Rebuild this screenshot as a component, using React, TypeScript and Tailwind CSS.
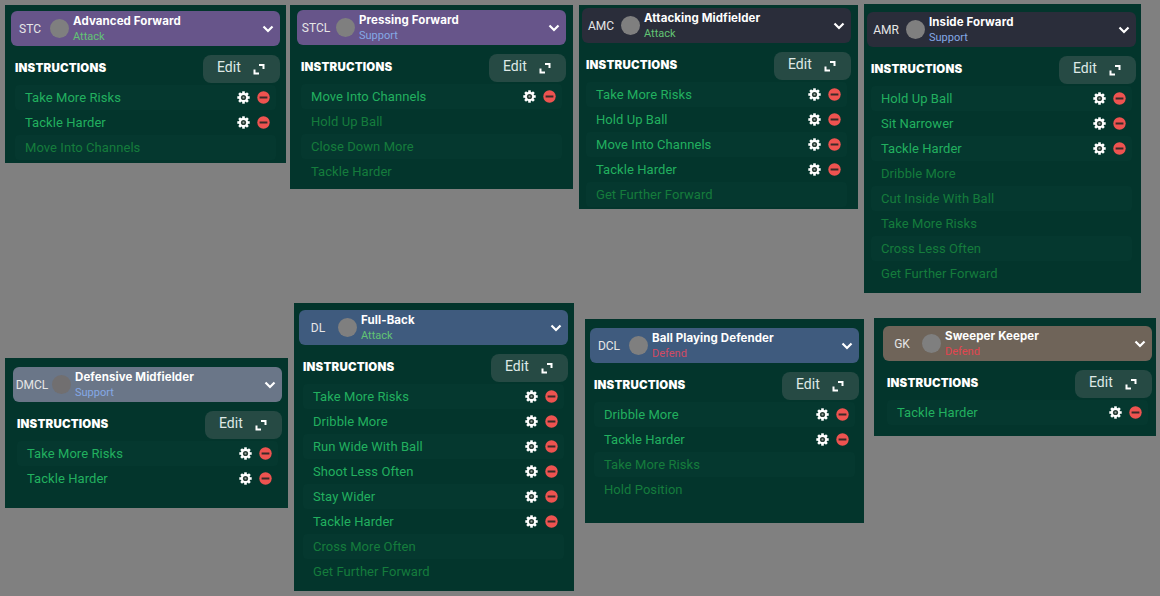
type Panel = {
  pos: string;
  code: string;
  name: string;
  duty: string;
  head: string;
  dutyColor: string;
  avatar: string;
  active: string[];
  inactive: string[];
};

const panels: Panel[] = [
  { pos: "left-[5px] top-[5px] w-[281px] h-[158px] pl-[6px] pt-[6px]", code: "STC", name: "Advanced Forward", duty: "Attack", head: "bg-[#67558a]", dutyColor: "text-[#62c474]", avatar: "bg-[#7f7f7f]", active: ["Take More Risks", "Tackle Harder"], inactive: ["Move Into Channels"] },
  { pos: "left-[290px] top-[5px] w-[283px] h-[184px] pl-[7px] pt-[5px]", code: "STCL", name: "Pressing Forward", duty: "Support", head: "bg-[#67558a]", dutyColor: "text-[#85a9e6]", avatar: "bg-[#7f7f7f]", active: ["Move Into Channels"], inactive: ["Hold Up Ball", "Close Down More", "Tackle Harder"] },
  { pos: "left-[579px] top-[5px] w-[279px] h-[204px] pl-[3px] pt-[3px]", code: "AMC", name: "Attacking Midfielder", duty: "Attack", head: "bg-[#2a2d3a]", dutyColor: "text-[#62c474]", avatar: "bg-[#7f7f7f]", active: ["Take More Risks", "Hold Up Ball", "Move Into Channels", "Tackle Harder"], inactive: ["Get Further Forward"] },
  { pos: "left-[864px] top-[4px] w-[277px] h-[289px] pl-[3px] pt-[8px]", code: "AMR", name: "Inside Forward", duty: "Support", head: "bg-[#2a2d3a]", dutyColor: "text-[#85a9e6]", avatar: "bg-[#7f7f7f]", active: ["Hold Up Ball", "Sit Narrower", "Tackle Harder"], inactive: ["Dribble More", "Cut Inside With Ball", "Take More Risks", "Cross Less Often", "Get Further Forward"] },
  { pos: "left-[5px] top-[358px] w-[283px] h-[150px] pl-[8px] pt-[9px]", code: "DMCL", name: "Defensive Midfielder", duty: "Support", head: "bg-[#6a7688]", dutyColor: "text-[#85a9e6]", avatar: "bg-[#716f70]", active: ["Take More Risks", "Tackle Harder"], inactive: [] },
  { pos: "left-[294px] top-[303px] w-[280px] h-[288px] pl-[5px] pt-[7px]", code: "DL", name: "Full-Back", duty: "Attack", head: "bg-[#3f5b7e]", dutyColor: "text-[#62c474]", avatar: "bg-[#7f7f7f]", active: ["Take More Risks", "Dribble More", "Run Wide With Ball", "Shoot Less Often", "Stay Wider", "Tackle Harder"], inactive: ["Cross More Often", "Get Further Forward"] },
  { pos: "left-[585px] top-[319px] w-[279px] h-[204px] pl-[5px] pt-[9px]", code: "DCL", name: "Ball Playing Defender", duty: "Defend", head: "bg-[#3f5b7e]", dutyColor: "text-[#d24a63]", avatar: "bg-[#7f7f7f]", active: ["Dribble More", "Tackle Harder"], inactive: ["Take More Risks", "Hold Position"] },
  { pos: "left-[874px] top-[318px] w-[282px] h-[118px] pl-[9px] pt-[8px]", code: "GK", name: "Sweeper Keeper", duty: "Defend", head: "bg-[#6f6459]", dutyColor: "text-[#e2454f]", avatar: "bg-[#7f7f7f]", active: ["Tackle Harder"], inactive: [] },
];

function ExpandIcon() {
  return (
    <svg width="12" height="12" viewBox="0 0 12 12" fill="none" stroke="white" strokeWidth="2">
      <path d="M6 2H10.5V6" />
      <path d="M1.5 6.5V10.5H6" />
    </svg>
  );
}

const teeth = [0, 45, 90, 135, 180, 225, 270, 315];

function GearIcon() {
  return (
    <svg width="13" height="13" viewBox="0 0 13 13">
      {teeth.map((deg) => (
        <rect key={deg} x="5.2" y="0.3" width="2.6" height="3" fill="white" transform={`rotate(${deg} 6.5 6.5)`} />
      ))}
      <circle cx="6.5" cy="6.5" r="4.7" fill="white" />
      <circle cx="6.5" cy="6.5" r="2.6" fill="#2c3f38" />
      <circle cx="6.5" cy="6.5" r="1" fill="#9aa5a0" />
    </svg>
  );
}

function RemoveIcon() {
  return (
    <svg width="13" height="13" viewBox="0 0 13 13">
      <circle cx="6.5" cy="6.5" r="6.2" fill="#ee5350" />
      <rect x="2.6" y="5.5" width="7.8" height="2" fill="#3a2a28" />
    </svg>
  );
}

function Row({ label, on, shaded }: { label: string; on: boolean; shaded: boolean }) {
  return (
    <div className={`flex h-[25px] items-center justify-between rounded-[4px] pl-[10px] pr-[6px] ${shaded ? "bg-[#05382f]" : ""}`}>
      <span className={`text-[13px] tracking-[0.06px] ${on ? "text-[#22b05f]" : "text-[#157c3c]"}`}>{label}</span>
      {on && (
        <span className="flex items-center gap-[7px]">
          <GearIcon />
          <RemoveIcon />
        </span>
      )}
    </div>
  );
}

function Card({ p }: { p: Panel }) {
  const rows = [...p.active.map((l) => ({ l, on: true })), ...p.inactive.map((l) => ({ l, on: false }))];
  return (
    <section className={`absolute bg-[#03352c] ${p.pos}`}>
      <div className="flex w-[269px] flex-col">
        <div className={`flex h-[35px] shrink-0 items-center rounded-[6px] pr-[6px] ${p.head}`}>
          <span className="w-[38px] text-center text-[12px] text-[#e6e6e6]">{p.code}</span>
          <span className={`ml-[1px] h-[19px] w-[19px] shrink-0 rounded-full ${p.avatar}`} />
          <div className="ml-[4px] flex min-w-0 flex-1 flex-col leading-[15px]">
            <span className="font-['Inter',sans-serif] text-[11.5px] font-bold tracking-[0.1px] text-white">{p.name}</span>
            <span className={`text-[11px] ${p.dutyColor}`}>{p.duty}</span>
          </div>
          <svg width="12" height="8" viewBox="0 0 12 8" fill="none" stroke="white" strokeWidth="2.2">
            <path d="M1.5 1.5L6 6L10.5 1.5" />
          </svg>
        </div>
        <div className="mt-[9px] flex items-center justify-between pl-[4px]">
          <h2 className="font-['Inter',sans-serif] text-[11.5px] font-black tracking-[0.2px] text-white">INSTRUCTIONS</h2>
          <button className="flex h-[28px] w-[77px] items-center gap-[12px] rounded-[8px] bg-[#264a44] pl-[14px] text-[14px] text-[#dfe9e6]">
            <span className="mb-[3px]">Edit</span>
            <ExpandIcon />
          </button>
        </div>
        <div className="mt-[2px] ml-[4px] flex w-[261px] flex-col self-start">
          {rows.map((r, i) => (
            <Row key={r.l} label={r.l} on={r.on} shaded={i % 2 === 0} />
          ))}
        </div>
      </div>
    </section>
  );
}

export default function App() {
  return (
    <main className="relative h-[596px] w-[1160px] overflow-hidden bg-[#808080] font-['Roboto',sans-serif]">
      {panels.map((p) => (
        <Card key={p.code} p={p} />
      ))}
    </main>
  );
}
